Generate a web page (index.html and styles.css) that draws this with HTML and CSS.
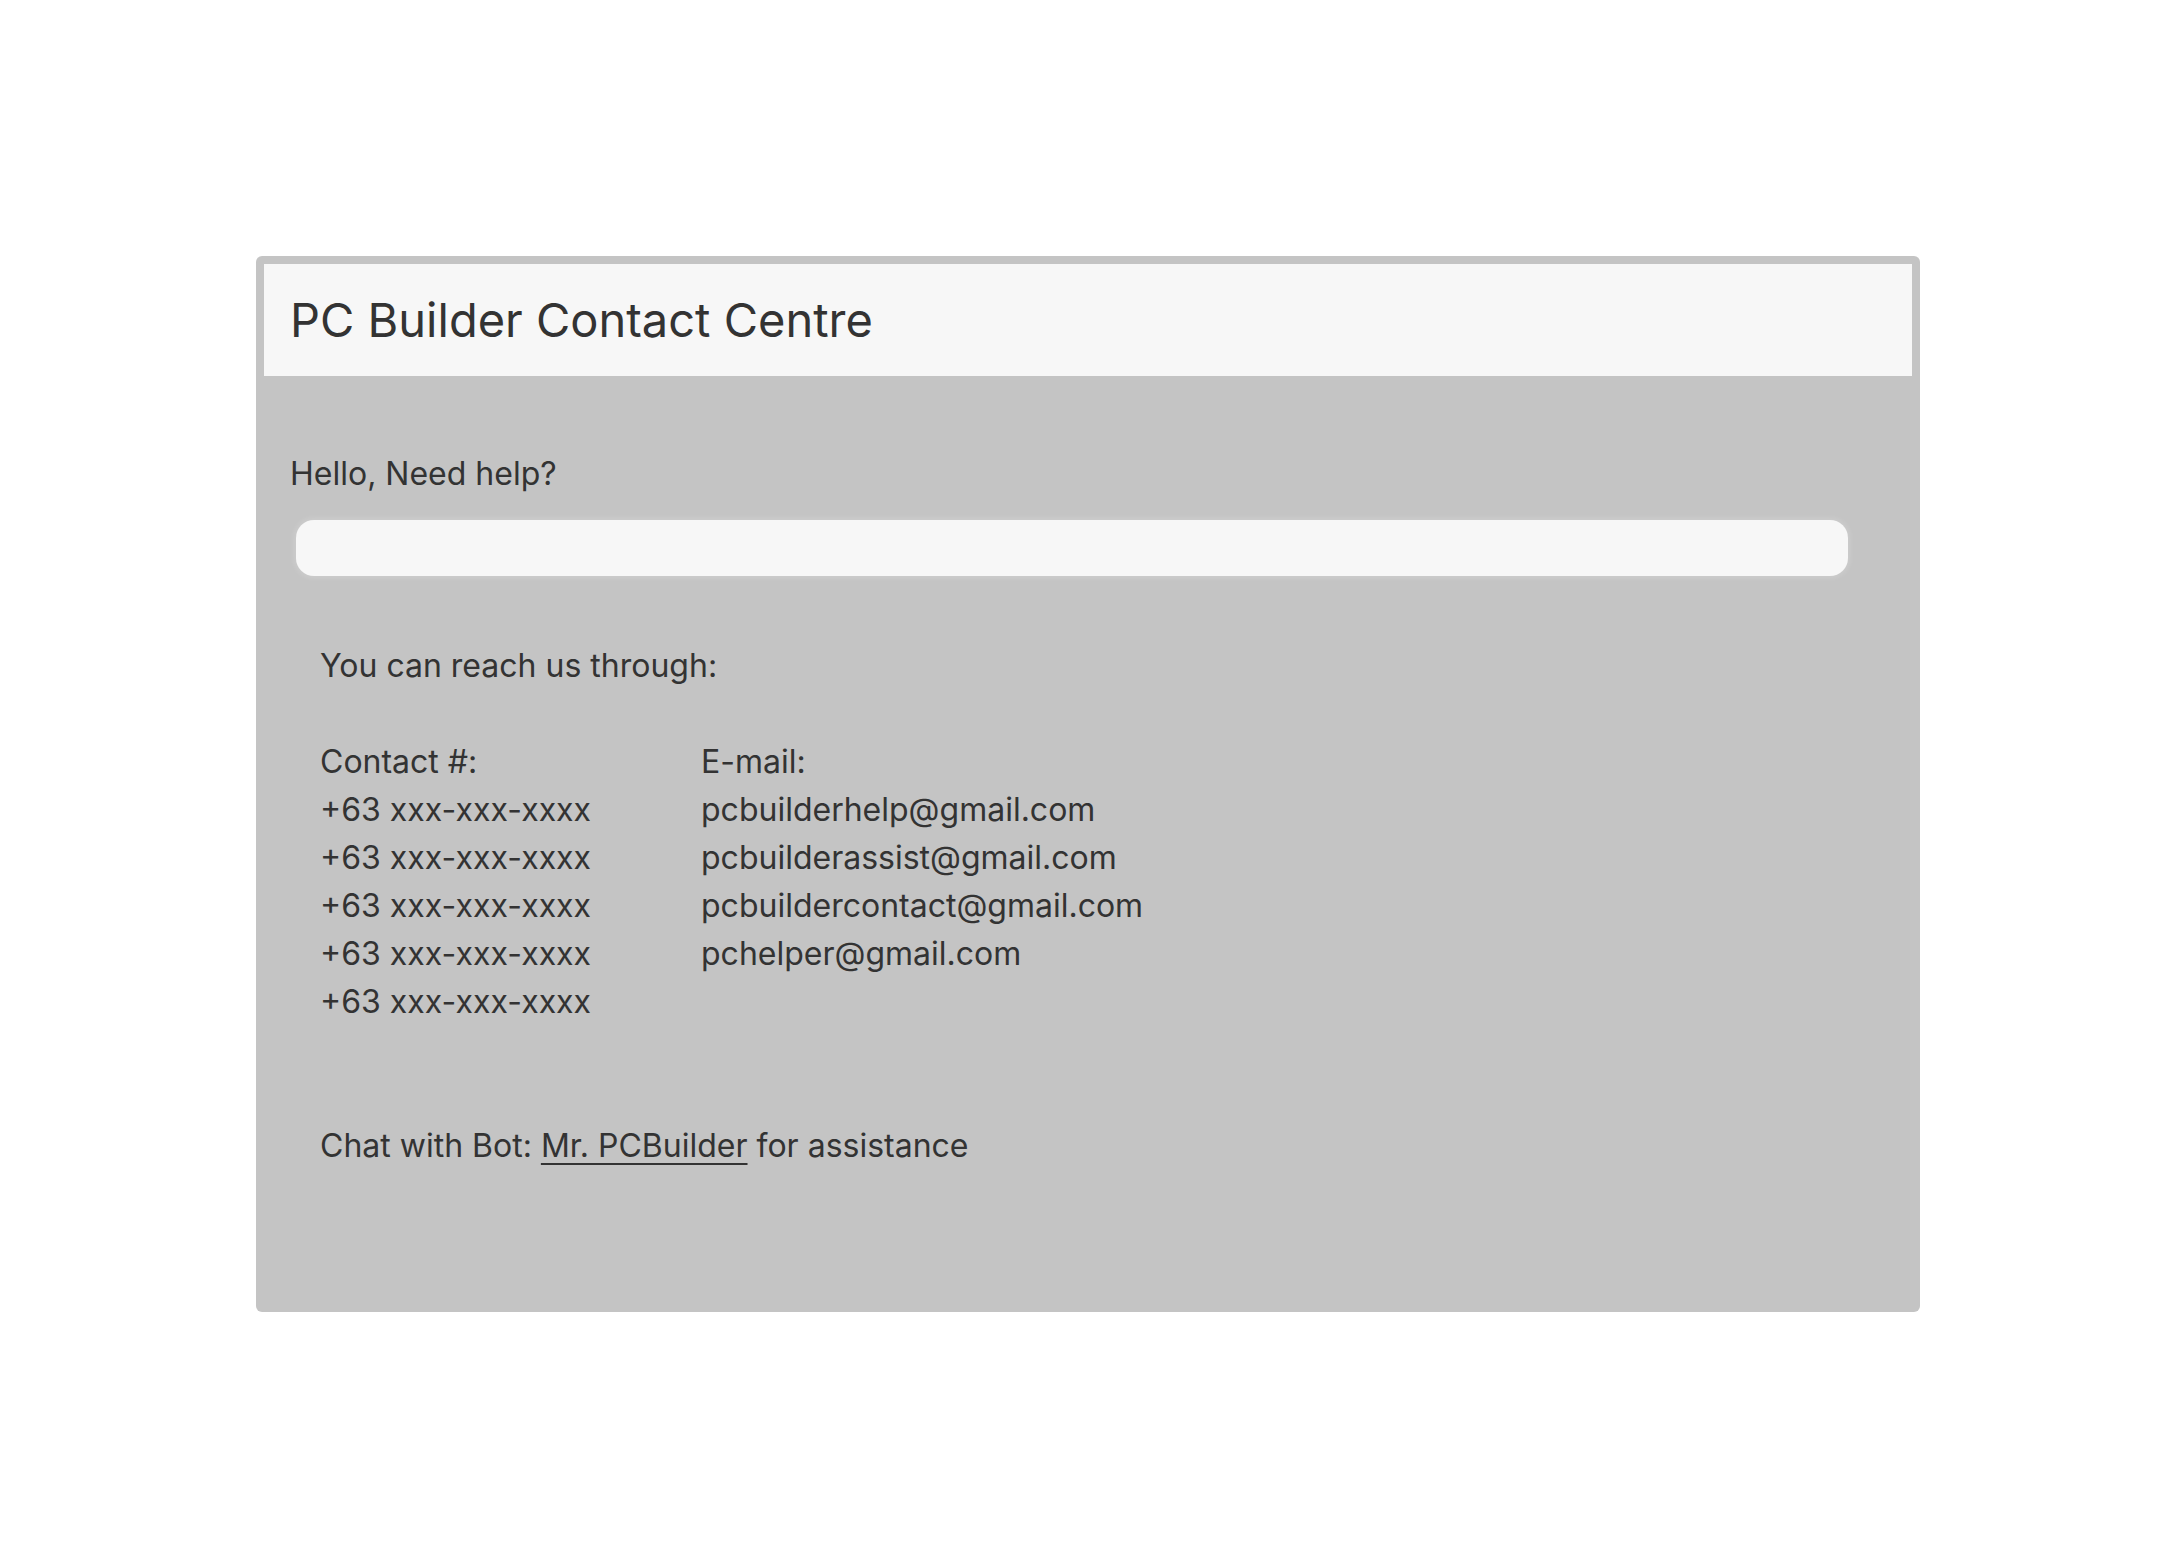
FILE: index.html
```html
<!DOCTYPE html>
<html lang="en">
<head>
<meta charset="utf-8">
<title>PC Builder Contact Centre</title>
<link rel="stylesheet" href="styles.css">
</head>
<body>
<div class="page">
  <div class="card">
    <div class="header">
      <h1 class="title">PC Builder Contact Centre</h1>
    </div>
    <div class="content">
      <p class="hello">Hello, Need help?</p>
      <input class="search" type="text">
      <div class="reach">
        <p class="line">You can reach us through:</p>
        <div class="columns">
          <div class="col phones">
            <p class="line">Contact #:</p>
            <p class="line">+63 xxx-xxx-xxxx</p>
            <p class="line">+63 xxx-xxx-xxxx</p>
            <p class="line">+63 xxx-xxx-xxxx</p>
            <p class="line">+63 xxx-xxx-xxxx</p>
            <p class="line">+63 xxx-xxx-xxxx</p>
          </div>
          <div class="col emails">
            <p class="line">E-mail:</p>
            <p class="line">pcbuilderhelp@gmail.com</p>
            <p class="line">pcbuilderassist@gmail.com</p>
            <p class="line">pcbuildercontact@gmail.com</p>
            <p class="line">pchelper@gmail.com</p>
          </div>
        </div>
        <p class="line chat">Chat with Bot: <a class="bot" href="#">Mr. PCBuilder</a> for assistance</p>
      </div>
    </div>
  </div>
</div>
</body>
</html>
```

FILE: styles.css
```css
html, body {
  margin: 0;
  padding: 0;
  background: #ffffff;
}

body {
  font-family: Inter, "Liberation Sans", sans-serif;
  color: #333333;
}

.page {
  display: flex;
  justify-content: center;
  padding-top: 256px;
}

.card {
  width: 1664px;
  box-sizing: border-box;
  background: #c4c4c4;
  border-radius: 6px;
  padding: 8px 8px 142px 8px;
}

.header {
  background: #f7f7f7;
  padding: 27px 26px;
}

.title {
  margin: 0;
  font-size: 47px;
  line-height: 58px;
  font-weight: 400;
  color: #333333;
}

.content {
  padding: 74px 0 0 26px;
}

.hello {
  margin: 0;
  font-size: 32px;
  line-height: 48px;
}

.search {
  display: block;
  box-sizing: border-box;
  margin: 22px 0 0 6px;
  width: 1552px;
  height: 56px;
  border: none;
  border-radius: 18px;
  background: #f7f7f7;
  box-shadow: 0 0 4px 3px rgba(255, 255, 255, 0.12);
  outline: none;
}

.reach {
  margin-top: 66px;
  padding-left: 30px;
}

.line {
  margin: 0;
  font-size: 32px;
  line-height: 48px;
}

.columns {
  display: flex;
  margin-top: 48px;
}

.phones {
  width: 381px;
}

.chat {
  margin-top: 96px;
}

.bot {
  color: #333333;
  text-decoration: underline;
  text-decoration-thickness: 2px;
  text-underline-offset: 6px;
}
```
